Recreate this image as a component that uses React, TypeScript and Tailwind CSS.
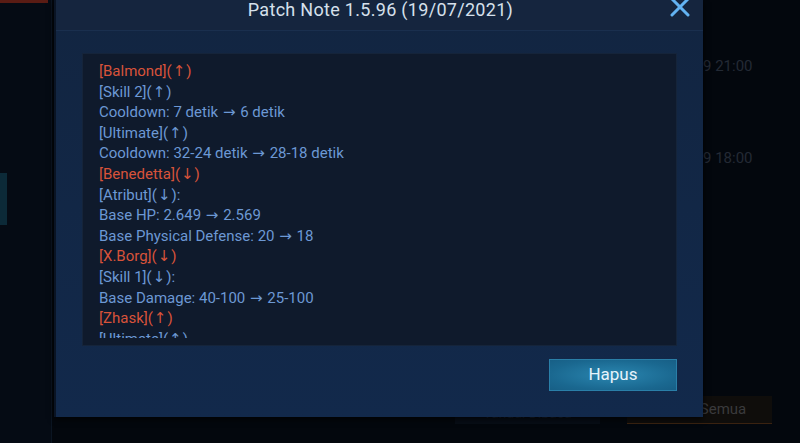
type Line = { text: string; hero?: boolean };

const lines: Line[] = [
  { text: "[Balmond](↑)", hero: true },
  { text: "[Skill 2](↑)" },
  { text: "Cooldown: 7 detik → 6 detik" },
  { text: "[Ultimate](↑)" },
  { text: "Cooldown: 32-24 detik → 28-18 detik" },
  { text: "[Benedetta](↓)", hero: true },
  { text: "[Atribut](↓):" },
  { text: "Base HP: 2.649 → 2.569" },
  { text: "Base Physical Defense: 20 → 18" },
  { text: "[X.Borg](↓)", hero: true },
  { text: "[Skill 1](↓):" },
  { text: "Base Damage: 40-100 → 25-100" },
  { text: "[Zhask](↑)", hero: true },
  { text: "[Ultimate](↑)" },
];

// arrows in the game font are wider than Roboto's, so give them their own family
const renderText = (t: string) =>
  t.split(/([↑↓→])/).map((part, i) =>
    /[↑↓→]/.test(part) ? (
      <span key={i} className="px-[1px]" style={{ fontFamily: "'DejaVu Sans', sans-serif" }}>
        {part}
      </span>
    ) : (
      <span key={i}>{part}</span>
    )
  );

const App = () => {
  return (
    <div
      className="relative h-[443px] w-[800px] overflow-hidden bg-[#03070d]"
      style={{ fontFamily: "Roboto, 'Liberation Sans', sans-serif" }}
    >
      {/* page behind the dialog */}
      <div className="absolute left-0 top-0 h-full w-[52px] border-r border-[#0b1522] bg-[#050b14]">
        <div className="h-[3px] w-[48px] bg-[#5a1c14]" />
        <div className="mt-[170px] h-[52px] w-[7px] bg-[#0c2a38]" />
      </div>
      <div className="absolute left-[703px] top-[55px] text-[15px] text-[#232a35]">9 21:00</div>
      <div className="absolute left-[703px] top-[147px] text-[15px] text-[#232a35]">9 18:00</div>
      <div className="absolute left-[455px] top-[402px] flex h-[22px] w-[145px] items-center justify-center bg-[#070d16] text-[14px] text-[#1a2230]">
        Tandai Dibaca
      </div>
      <div className="absolute left-[627px] top-[396px] flex h-[28px] w-[145px] items-center justify-center border-b border-[#3a2210] bg-[#0f0d0b] text-[15px] text-[#3a3a3c]">
        Hapus Semua
      </div>

      {/* dialog */}
      <div className="relative ml-[54px] flex h-[417px] w-[649px] flex-col border-l-2 border-[#0a1424] bg-gradient-to-b from-[#122541] to-[#12294b] shadow-[0_2px_6px_rgba(0,0,0,0.8)]">
        <div className="relative flex h-[31px] items-start justify-center border-b border-[#1a2f4e] bg-[#15253e]">
          <span className="mt-[-2px] pl-[2px] text-[18px] leading-[24px] tracking-[0.3px] text-[#d6e0ec]">
            Patch Note 1.5.96 (19/07/2021)
          </span>
          <svg
            className="absolute right-[12px] top-[-3px]"
            width="22"
            height="22"
            viewBox="0 0 22 22"
          >
            <path
              d="M3 2 L19 18 M19 2 L3 18"
              stroke="#63b3f2"
              strokeWidth="3"
              strokeLinecap="round"
            />
          </svg>
        </div>

        <div className="mx-[26px] mt-[22px] h-[293px] border border-[#15243a] bg-[#0f1a2c] px-[16px] pb-[8px] pt-[7px]">
          <div className="h-[277px] overflow-hidden text-[15px] leading-[20.6px]">
            {lines.map((l, i) => (
              <div key={i} className={l.hero ? "text-[#d8533a]" : "text-[#6c98d4]"}>
                {renderText(l.text)}
              </div>
            ))}
          </div>
        </div>

        <div className="flex justify-end pr-[26px] pt-[13px]">
          <button className="h-[32px] w-[128px] border border-[#2a7fa8] bg-[radial-gradient(ellipse_at_center,#2a86b0_0%,#1a6890_70%,#175f86_100%)] text-[17px] text-[#e6f3fb]">
            Hapus
          </button>
        </div>
      </div>
    </div>
  );
};

export default App;
